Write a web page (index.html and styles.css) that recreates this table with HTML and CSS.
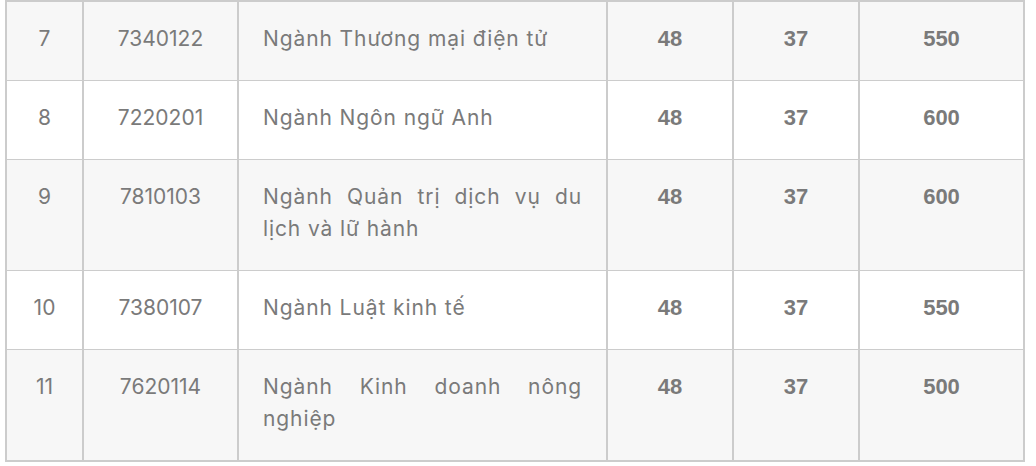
FILE: index.html
```html
<!DOCTYPE html>
<html lang="vi">
<head>
<meta charset="utf-8">
<title>Bảng ngành</title>
<link rel="stylesheet" href="styles.css">
</head>
<body>
<div class="page">
  <table class="majors">
    <colgroup>
      <col class="c-stt">
      <col class="c-code">
      <col class="c-name">
      <col class="c-a">
      <col class="c-b">
      <col class="c-c">
    </colgroup>
    <tbody>
      <tr class="odd">
        <td class="center">7</td>
        <td class="center">7340122</td>
        <td class="name">Ngành Thương mại điện tử</td>
        <td class="num">48</td>
        <td class="num">37</td>
        <td class="num last">550</td>
      </tr>
      <tr class="even">
        <td class="center">8</td>
        <td class="center">7220201</td>
        <td class="name">Ngành Ngôn ngữ Anh</td>
        <td class="num">48</td>
        <td class="num">37</td>
        <td class="num last">600</td>
      </tr>
      <tr class="odd">
        <td class="center">9</td>
        <td class="center">7810103</td>
        <td class="name">Ngành Quản trị dịch vụ du lịch và lữ hành</td>
        <td class="num">48</td>
        <td class="num">37</td>
        <td class="num last">600</td>
      </tr>
      <tr class="even">
        <td class="center">10</td>
        <td class="center">7380107</td>
        <td class="name">Ngành Luật kinh tế</td>
        <td class="num">48</td>
        <td class="num">37</td>
        <td class="num last">550</td>
      </tr>
      <tr class="odd final">
        <td class="center">11</td>
        <td class="center">7620114</td>
        <td class="name">Ngành Kinh doanh nông nghiệp</td>
        <td class="num">48</td>
        <td class="num">37</td>
        <td class="num last">500</td>
      </tr>
    </tbody>
  </table>
</div>
</body>
</html>
```

FILE: styles.css
```css
html, body {
  margin: 0;
  padding: 0;
  background: #ffffff;
}

.page {
  padding: 0 0 0 5px;
}

.majors {
  width: 1020px;
  table-layout: fixed;
  border-collapse: separate;
  border-spacing: 0;
  border: 2px solid #cccccc;
  font-family: Inter, "Noto Sans", sans-serif;
  font-size: 21px;
  line-height: 32px;
  color: #7a7a7a;
}

.c-stt { width: 77px; }
.c-code { width: 155px; }
.c-name { width: 369px; }
.c-a { width: 126px; }
.c-b { width: 126px; }
.c-c { width: 163px; }

.majors td {
  box-sizing: border-box;
  vertical-align: top;
  padding: 21px 24px 25px;
  border-right: 2px solid #cccccc;
  border-bottom: 1px solid #cccccc;
}

.majors td.last {
  border-right: 0;
}

.majors tr.final td {
  border-bottom: 0;
}

.majors tr.odd td {
  background: #f7f7f7;
}

.majors tr.even td {
  background: #ffffff;
}

.center {
  text-align: center;
}

.name {
  text-align: justify;
  letter-spacing: 0.9px;
}

.num {
  text-align: center;
  font-family: "Liberation Sans", Arial, sans-serif;
  font-weight: bold;
  font-size: 22px;
}
```
